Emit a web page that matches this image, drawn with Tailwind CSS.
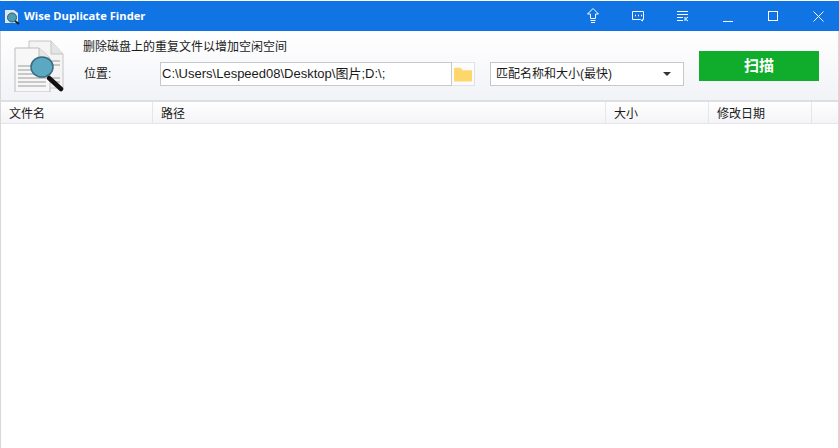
<!DOCTYPE html>
<html lang="zh">
<head>
  <meta charset="UTF-8">
  <title>Wise Duplicate Finder</title>
  <script src="https://cdn.jsdelivr.net/npm/@tailwindcss/browser@4"></script>
</head>
<body class="w-[839px] h-[448px] overflow-hidden bg-white font-['Liberation_Sans','Noto_Sans_CJK_SC',sans-serif] text-[12px] text-[#1a1a1a]">
  <div class="flex flex-col h-full border-x border-[#d8d8d8] border-t border-t-white">
    <!-- title bar -->
    <div class="h-[30px] -mx-px flex items-center bg-[#1174e4] text-white shrink-0">
      <svg class="ml-[4px] w-[17px] h-[17px]" viewBox="0 0 17 17">
        <path d="M1 2h9l4 3v10H1z" fill="#dfe7ee"/>
        <circle cx="8" cy="9.500" r="4.500" fill="#4d9db5" stroke="#2c5c74"/>
        <path d="M11 13l4 3" stroke="#10202c" stroke-width="2"/>
      </svg>
      <span class="ml-[3px] font-['Open_Sans'] font-bold text-[11.2px]">Wise Duplicate Finder</span>
      <div class="ml-auto flex items-center">
        <svg class="w-[16px] h-[18px] mr-[30px]" viewBox="0 0 16 18" fill="none" stroke="white">
          <path d="M8 1.500L2.500 7H5.500V11.500H10.500V7H13.500Z"/>
          <path d="M5.500 13.500h5M6 15.500h4"/>
        </svg>
        <svg class="w-[14px] h-[12px] mr-[31px]" viewBox="0 0 14 12" fill="none" stroke="white">
          <path d="M1.500 1.500h11v8h-1v1.500l-2-1.500h-8z"/>
          <path d="M4 5.500h1M7 5.500h1M10 5.500h1" stroke-width="1.500"/>
        </svg>
        <svg class="w-[13px] h-[12px] mr-[34px]" viewBox="0 0 13 12" fill="none" stroke="white">
          <path d="M1 1.500h11M1 4.500h11M1 7.500h6M1 10.500h6"/>
          <path d="M9 7v4M12 7l-2.500 2 2.500 2"/>
        </svg>
        <div class="w-[10px] h-px bg-white mt-[11px] mr-[35px]"></div>
        <div class="w-[10px] h-[10px] border border-white mr-[35px]"></div>
        <svg class="w-[11px] h-[11px] mr-[15px]" viewBox="0 0 11 11" stroke="white" fill="none">
          <path d="M.5.5l10 10M10.500.5l-10 10"/>
        </svg>
      </div>
    </div>

    <!-- toolbar -->
    <div class="h-[69px] shrink-0 flex bg-gradient-to-b from-white to-[#f2f3f7]">
      <svg class="ml-[12px] mt-[9px] w-[52px] h-[52px] shrink-0" viewBox="0 0 52 52">
        <path d="M16 1h22l12 13v34H16z" fill="#f4f4f4" stroke="#c4c4c4"/>
        <path d="M38 1v13h12" fill="#e4e4e4" stroke="#c4c4c4"/>
        <path d="M2 8h24l11 10v34H2z" fill="#f7f7f7" stroke="#bdbdbd"/>
        <path d="M26 8v10h11" fill="#e6e6e6" stroke="#bdbdbd"/>
        <path d="M5 26h28M5 30h28M5 34h28M5 38h28M5 42h28M5 46h28M38 21h9M38 25h9M38 38h9M38 42h9" stroke="#9a9a9a"/>
        <path d="M36 38l12 11" stroke="#111" stroke-width="4.500" stroke-linecap="round"/>
        <ellipse cx="29" cy="27" rx="11" ry="10" fill="#5aa8c2" stroke="#3a6d80" stroke-width="1.500"/>
      </svg>
      <div class="ml-[19px] flex flex-col">
        <div class="-ml-px mt-[8px] h-[16px] leading-[16px]">删除磁盘上的重复文件以增加空闲空间</div>
        <div class="mt-[7px] flex items-center">
          <span class="w-[76px]">位置:</span>
          <div class="w-[292px] h-[24px] px-px flex items-center bg-white border border-[#c8c8c8] text-[13px]">C:\Users\Lespeed08\Desktop\图片;D:\;</div>
          <div class="w-[23px] h-[24px] flex items-center justify-center bg-white/60 border border-l-0 border-[#e2e2e6]">
            <svg class="w-[18px] h-[16px]" viewBox="0 0 19 16">
              <path d="M0 2.500a1 1 0 0 1 1-1h6l2 2.500h9a1 1 0 0 1 1 1V15a1 1 0 0 1-1 1H1a1 1 0 0 1-1-1z" fill="#fdd76b"/>
            </svg>
          </div>
          <div class="ml-[15px] w-[194px] h-[24px] pl-[5px] pr-[12px] flex items-center justify-between bg-white border border-[#c8c8c8]">
            <span>匹配名称和大小(最快)</span>
            <div class="w-0 h-0 border-x-[4px] border-x-transparent border-t-[4px] border-t-[#333]"></div>
          </div>
        </div>
      </div>
      <button class="ml-auto mr-[19px] mt-[20px] w-[120px] h-[30px] bg-[#0fad2b] text-white text-[15px] font-bold">扫描</button>
    </div>

    <!-- list header -->
    <div class="h-[24px] shrink-0 flex border-t-2 border-t-[#dedfe3] border-b border-b-[#e6e6ea] bg-gradient-to-b from-white to-[#f4f4f8] leading-[24px]">
      <div class="w-[152px] pl-[8px] border-r border-[#e6e6ea]">文件名</div>
      <div class="w-[453px] pl-[8px] border-r border-[#e6e6ea]">路径</div>
      <div class="w-[103px] pl-[8px] border-r border-[#e6e6ea]">大小</div>
      <div class="w-[103px] pl-[8px] border-r border-[#e6e6ea]">修改日期</div>
    </div>

    <div class="flex-1 bg-white"></div>
  </div>
</body>
</html>
